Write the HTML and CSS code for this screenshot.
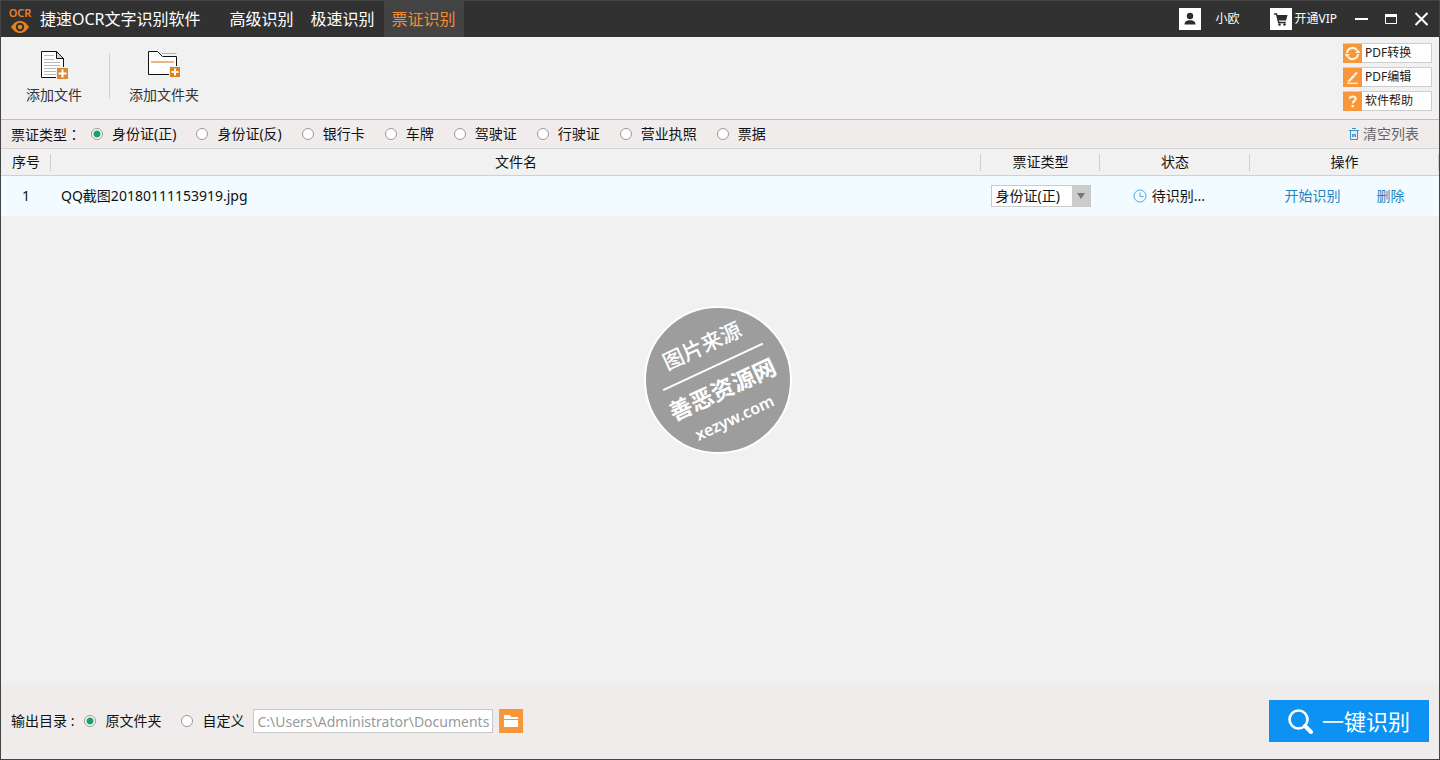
FILE: index.html
```html
<!DOCTYPE html>
<html lang="zh-CN">
<head>
<meta charset="utf-8">
<title>捷速OCR文字识别软件</title>
<link rel="stylesheet" href="styles.css">
</head>
<body>
<div class="window">
  <header class="titlebar">
    <div class="logo">
      <span class="logo-text">OCR</span>
      <svg class="logo-eye" viewBox="0 0 18 12" aria-hidden="true">
        <path d="M0 6C3 1.500 6 0 9 0s6 1.500 9 6c-3 4.500-6 6-9 6S3 10.500 0 6z" fill="#e8811f"/>
        <circle cx="9" cy="6" r="4.200" fill="#313131"/>
        <circle cx="9" cy="6" r="2.300" fill="#e8811f"/>
      </svg>
    </div>
    <h1 class="app-name">捷速OCR文字识别软件</h1>
    <nav class="tabs">
      <a class="tab" href="#advanced">高级识别</a>
      <a class="tab" href="#fast">极速识别</a>
      <a class="tab tab-active" href="#ticket" aria-current="page">票证识别</a>
    </nav>
    <div class="account">
      <button class="user" type="button">
        <svg class="tile" viewBox="0 0 22 22" aria-hidden="true">
          <rect width="22" height="22" fill="#fff"/>
          <circle cx="11" cy="8" r="3.200" fill="#2d2d2d"/>
          <path d="M5.500 16.500c0-3 2.500-4.300 5.500-4.300s5.500 1.300 5.500 4.300z" fill="#2d2d2d"/>
        </svg>
        小欧
      </button>
      <button class="vip" type="button">
        <svg class="tile" viewBox="0 0 22 22" aria-hidden="true">
          <rect width="22" height="22" fill="#fff"/>
          <path d="M4 6h2.500l2.200 8.500h7" fill="none" stroke="#2d2d2d" stroke-width="1.400"/>
          <path d="M7 7h10.500l-1.500 5.500H8.500z" fill="#2d2d2d"/>
          <circle cx="9.500" cy="16.500" r="1.300" fill="#2d2d2d"/>
          <circle cx="14.500" cy="16.500" r="1.300" fill="#2d2d2d"/>
        </svg>
        开通VIP
      </button>
    </div>
    <div class="window-controls">
      <button type="button" aria-label="最小化"><svg width="14" height="16" viewBox="0 0 14 16"><path d="M0 8h13" stroke="#fff" stroke-width="2"/></svg></button>
      <button type="button" aria-label="最大化"><svg width="13" height="16" viewBox="0 0 13 16"><path d="M.500 4v8.500h11V4" fill="none" stroke="#fff"/><path d="M0 4.500h12" stroke="#fff" stroke-width="3"/></svg></button>
      <button type="button" aria-label="关闭"><svg width="15" height="16" viewBox="0 0 15 16"><path d="M1.500 2l12 12M13.500 2l-12 12" stroke="#fff" stroke-width="2"/></svg></button>
    </div>
  </header>

  <div class="toolbar">
    <button class="tool" type="button">
      <svg width="28" height="30" viewBox="0 0 28 30" aria-hidden="true">
        <path d="M1.500 1.500h15l7 7v19h-22z" fill="#fff" stroke="#111"/>
        <path d="M16.500 1.500v7h7z" fill="#e6cfb4" stroke="#111"/>
        <path d="M4 5.500h10M4 9.500h10M4 12.500h16M4 15.500h16M4 18.500h12M4 21.500h12M4 24.500h12" stroke="#b9b9b9"/>
        <rect x="16" y="17" width="12" height="12" fill="#f6efe6"/>
        <rect x="17" y="18" width="11" height="11" fill="#d98a36"/>
        <path d="M22.500 19.500v8M18.500 23.500h8" stroke="#fff" stroke-width="2"/>
      </svg>
      添加文件
    </button>
    <span class="tool-divider"></span>
    <button class="tool" type="button">
      <svg width="32" height="28" viewBox="0 0 32 28" aria-hidden="true">
        <path d="M.500 1.500h9l5 5h14v18H.500z" fill="#fff" stroke="#111"/>
        <path d="M14 3.500h14.500" stroke="#b5b5b5"/>
        <path d="M3 12h23" stroke="#eeb67a" stroke-width="2"/>
        <rect x="21" y="16" width="11" height="11" fill="#f1f1f1"/>
        <rect x="22" y="17" width="10" height="10" fill="#e07f1c"/>
        <path d="M27 18.500v7M23.500 22h7" stroke="#fff" stroke-width="2"/>
      </svg>
      添加文件夹
    </button>
    <div class="shortcuts">
      <button class="shortcut" type="button">
        <svg viewBox="0 0 18 18" aria-hidden="true"><rect width="18" height="18" fill="#f7963a"/><path d="M3.800 8.500a5.200 5.200 0 0 1 9.400-2.600M14.200 9.500a5.200 5.200 0 0 1-9.400 2.600" fill="none" stroke="#fff3dc" stroke-width="2"/><path d="M11.500 8.500h5L14.200 5.200zM6.500 9.500h-5l2.300 3.300z" fill="#fff3dc"/></svg>
        PDF转换
      </button>
      <button class="shortcut" type="button">
        <svg viewBox="0 0 18 18" aria-hidden="true"><rect width="18" height="18" fill="#f7963a"/><path d="M5 11.500l7.500-8 1.500 1.500-7.500 8-2.200.700z" fill="#fff3dc"/><path d="M4 14.500h10" stroke="#fff3dc" stroke-width="1.200"/></svg>
        PDF编辑
      </button>
      <button class="shortcut" type="button">
        <svg viewBox="0 0 18 18" aria-hidden="true"><rect width="18" height="18" fill="#f7963a"/><path d="M6.500 6.500c0-3 5.500-3 5.500 0 0 2-2.800 2-2.800 4.500" fill="none" stroke="#fff3dc" stroke-width="2"/><path d="M9.200 12.300v2.200" stroke="#fff3dc" stroke-width="2.200"/></svg>
        软件帮助
      </button>
    </div>
  </div>

  <div class="filterbar" role="radiogroup" aria-labelledby="type-label">
    <span class="filter-label" id="type-label">票证类型<span class="colon" lang="zh-TW">：</span></span>
    <div class="options">
      <label class="option"><input type="radio" name="type" checked>身份证(正)</label>
      <label class="option"><input type="radio" name="type">身份证(反)</label>
      <label class="option"><input type="radio" name="type">银行卡</label>
      <label class="option"><input type="radio" name="type">车牌</label>
      <label class="option"><input type="radio" name="type">驾驶证</label>
      <label class="option"><input type="radio" name="type">行驶证</label>
      <label class="option"><input type="radio" name="type">营业执照</label>
      <label class="option"><input type="radio" name="type">票据</label>
    </div>
    <button class="clear" type="button">
      <svg width="10" height="12" viewBox="0 0 10 12" aria-hidden="true"><path d="M0 2.500h10M3 .500h4M1.500 3v8.500h7V3M3.500 9V6.500h3V9M5 6.500V9" fill="none" stroke="#3c93c4"/></svg>
      清空列表
    </button>
  </div>

  <main class="content">
    <table class="files">
      <colgroup><col class="col-index"><col><col class="col-type"><col class="col-state"><col class="col-action"></colgroup>
      <thead>
        <tr><th>序号</th><th>文件名</th><th>票证类型</th><th>状态</th><th>操作</th></tr>
      </thead>
      <tbody>
        <tr>
          <td>1</td>
          <td class="file-name">QQ截图20180111153919.jpg</td>
          <td>
            <div class="type-picker">
              <select aria-label="票证类型"><option>身份证(正)</option><option>身份证(反)</option><option>银行卡</option></select>
              <svg viewBox="0 0 18 20" aria-hidden="true"><rect width="18" height="20" fill="#cbcbcb"/><path d="M5 7h8l-4 6z" fill="#777"/></svg>
            </div>
          </td>
          <td>
            <div class="state">
              <svg width="14" height="14" viewBox="0 0 14 14" aria-hidden="true"><circle cx="7" cy="7" r="6" fill="none" stroke="#5aa6d2"/><path d="M7 3.500V7.500h3.500" fill="none" stroke="#5aa6d2"/></svg>
              待识别...
            </div>
          </td>
          <td><div class="actions"><a href="#start">开始识别</a><a href="#delete">删除</a></div></td>
        </tr>
      </tbody>
    </table>
  </main>

  <footer class="footer">
    <span class="output-label">输出目录 :</span>
    <div class="options">
      <label class="option"><input type="radio" name="output" checked>原文件夹</label>
      <label class="option"><input type="radio" name="output">自定义</label>
    </div>
    <input class="path" type="text" aria-label="输出目录" value="C:\Users\Administrator\Documents">
    <button class="browse" type="button" aria-label="浏览">
      <svg width="14" height="12" viewBox="0 0 14 12"><path d="M0 0h6l1 2h7v2H0z" fill="#fff"/><path d="M0 5h14v7H0z" fill="#fff"/></svg>
    </button>
    <button class="start" type="button">
      <svg width="25" height="25" viewBox="0 0 25 25" aria-hidden="true"><circle cx="10.500" cy="10.500" r="9" fill="none" stroke="#fff" stroke-width="2.600"/><path d="M17 17l6 6" stroke="#fff" stroke-width="4" stroke-linecap="round"/></svg>
      一键识别
    </button>
  </footer>

  <svg class="stamp" viewBox="-75 -75 150 150" role="img" aria-label="图片来源 善恶资源网">
    <circle r="73" fill="#9d9d9d" stroke="#fff" stroke-width="2"/>
    <g transform="rotate(-25)" fill="#fff" text-anchor="middle">
      <text class="stamp-source" x="0" y="-30">图片来源</text>
      <path d="M-54-14H56" stroke="#fff" stroke-width="2"/>
      <text class="stamp-site" x="0" y="19">善恶资源网</text>
      <text class="stamp-url" x="-1" y="47">xezyw.com</text>
    </g>
  </svg>
</div>
</body>
</html>
```
FILE: styles.css
```css
* {
  box-sizing: border-box;
}

body {
  margin: 0;
  color: #111;
  font: 14px/20px "Noto Sans", "Noto Sans CJK SC", sans-serif;
}

button {
  display: flex;
  align-items: center;
  margin: 0;
  padding: 0;
  border: 0;
  background: none;
  color: inherit;
  font: inherit;
  white-space: nowrap;
  cursor: pointer;
}

a {
  color: #2586bf;
  text-decoration: none;
}

svg {
  display: block;
  flex: none;
}

.window {
  position: relative;
  display: flex;
  flex-direction: column;
  min-height: 100vh;
  border: 1px solid #444;
  background: #f1f1f1;
}

/* Title bar */
.titlebar {
  display: flex;
  align-items: center;
  height: 36px;
  padding: 0 10px 0 7px;
  background: #313131;
  color: #fff;
}

.logo {
  display: flex;
  flex-direction: column;
  align-items: center;
  gap: 1px;
  width: 24px;
  margin-right: 8px;
}

.logo-text {
  color: #e8811f;
  font-size: 11px;
  font-weight: 600;
  line-height: 14px;
}

.logo-eye {
  width: 18px;
  height: 12px;
}

.app-name {
  margin: 0;
  font-size: 16px;
  font-weight: 400;
  white-space: nowrap;
}

.tabs {
  display: flex;
  align-self: stretch;
  gap: 1px;
  margin-left: 21px;
}

.tab {
  display: flex;
  align-items: center;
  padding: 0 8px;
  color: #fff;
  font-size: 16px;
  white-space: nowrap;
}

.tab-active {
  background: #434343;
  color: #f28c33;
}

.account {
  display: flex;
  gap: 31px;
  margin-left: auto;
  font-size: 12px;
}

.tile {
  width: 22px;
  height: 22px;
}

.user {
  gap: 14px;
}

.vip {
  gap: 2px;
}

.window-controls {
  display: flex;
  gap: 16px;
  margin-left: 18px;
}

/* Toolbar */
.toolbar {
  display: flex;
  align-items: flex-start;
  padding: 6px 7px 8px 25px;
  border-bottom: 1px solid #bdbdbd;
}

.tool {
  flex-direction: column;
  justify-content: space-between;
  height: 55px;
  margin-top: 7px;
  color: #333;
}

.tool-divider {
  width: 1px;
  height: 46px;
  margin: 10px 19px 0 27px;
  background: #cfcfcf;
}

.shortcuts {
  display: flex;
  flex-direction: column;
  gap: 4px;
  margin-left: auto;
}

.shortcut {
  gap: 3px;
  width: 89px;
  height: 20px;
  border: 1px solid #cdcdcd;
  border-left: 0;
  background: #fff;
  color: #222;
  font-size: 12px;
  line-height: 18px;
}

.shortcut svg {
  width: 19px;
  height: 19px;
}

/* Type filter */
.filterbar {
  display: flex;
  align-items: center;
  height: 29px;
  padding: 0 20px 0 10px;
  border-bottom: 1px solid #d4d4d4;
  background: #f0ecec;
  white-space: nowrap;
}

.filter-label {
  margin-right: 10px;
}

.colon {
  font-family: "Noto Sans CJK TC", sans-serif;
}

.options {
  display: flex;
  gap: 20px;
}

.option {
  display: flex;
  align-items: center;
  gap: 9px;
  white-space: nowrap;
}

.option input {
  appearance: none;
  width: 12px;
  height: 12px;
  margin: 0;
  border: 1px solid #999;
  border-radius: 50%;
  background: #fff;
}

.option input:checked {
  background: radial-gradient(circle, #18a566 3px, #fff 4px);
}

.clear {
  gap: 4px;
  margin-left: auto;
  color: #666;
}

/* File table */
.content {
  flex: 1;
}

.files {
  width: 100%;
  border-collapse: separate;
  border-spacing: 0;
  table-layout: fixed;
}

.col-index {
  width: 50px;
}

.col-type {
  width: 119px;
}

.col-state {
  width: 150px;
}

.col-action {
  width: 189px;
}

.files th {
  height: 27px;
  padding: 0;
  border-bottom: 1px solid #d0d0d0;
  background: linear-gradient(#cfcfcf, #cfcfcf) right center / 1px 17px no-repeat;
  font-weight: 400;
}

.files td {
  height: 40px;
  padding: 0;
  background: #f2fbff;
  text-align: center;
}

.files .file-name {
  padding-left: 10px;
  text-align: left;
}

.type-picker {
  display: flex;
  width: 100px;
  height: 22px;
  margin: 0 auto;
  border: 1px solid #cbcbcb;
  background: #fff;
}

.type-picker select {
  flex: 1;
  min-width: 0;
  appearance: none;
  padding: 0 0 0 4px;
  border: 0;
  background: none;
  color: inherit;
  font: inherit;
}

.type-picker svg {
  width: 18px;
  height: 20px;
}

.state {
  display: flex;
  align-items: center;
  justify-content: center;
  gap: 5px;
  padding-right: 12px;
}

.actions {
  display: flex;
  justify-content: center;
  gap: 36px;
}

/* Output settings */
.footer {
  display: flex;
  align-items: center;
  height: 76px;
  padding: 0 10px;
  background: #f0eceb;
  white-space: nowrap;
}

.output-label {
  margin-right: 10px;
}

.path {
  width: 240px;
  height: 24px;
  margin: 0 6px 0 9px;
  padding: 0 3px;
  border: 1px solid #c8c8c8;
  background: #fff;
  color: #9a9a9a;
  font: inherit;
}

.browse {
  justify-content: center;
  width: 24px;
  height: 24px;
  background: #f7963a;
}

.start {
  justify-content: center;
  gap: 9px;
  width: 160px;
  height: 42px;
  margin-left: auto;
  background: #0b92f2;
  color: #fff;
  font-size: 22px;
}

/* Source stamp laid over the file list */
.stamp {
  position: absolute;
  top: calc(50% - 75px);
  left: calc(50% - 77px);
  width: 150px;
  height: 150px;
}

.stamp-source {
  font-size: 21px;
  font-weight: 500;
}

.stamp-site {
  font-size: 23px;
  font-weight: 700;
}

.stamp-url {
  font-size: 16px;
  font-weight: 600;
}
```
